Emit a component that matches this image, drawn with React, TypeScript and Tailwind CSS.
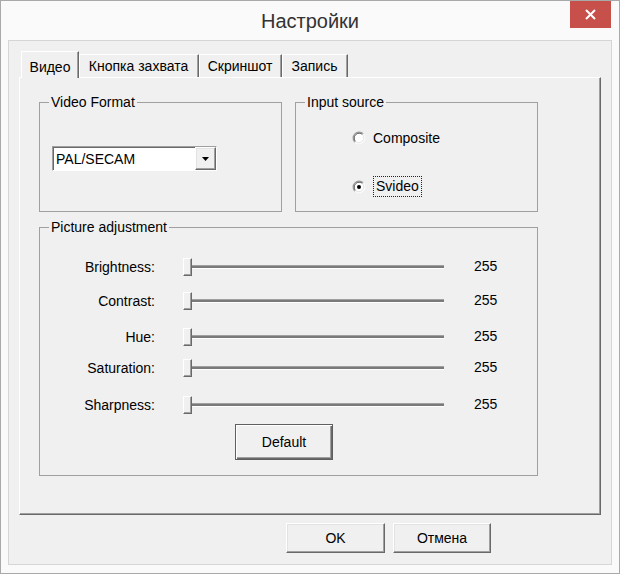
import React from "react";

const raised =
  "bg-[#f0f0f0] border border-t-white border-l-white border-r-[#696969] border-b-[#696969] shadow-[inset_-1px_-1px_0_#a0a0a0,inset_1px_1px_0_#e3e3e3]";

function Radio({ checked }: { checked?: boolean }) {
  return (
    <svg width="14" height="14" viewBox="0 0 14 14" className="shrink-0">
      <circle cx="7" cy="7" r="5.5" fill="#ffffff" />
      <path d="M2.76 11.24 A6 6 0 0 1 11.24 2.76" stroke="#9a9a9a" strokeWidth="1.2" fill="none" />
      <path d="M11.24 2.76 A6 6 0 0 1 2.76 11.24" stroke="#ffffff" strokeWidth="1" fill="none" />
      <path d="M3.47 10.53 A5 5 0 0 1 10.53 3.47" stroke="#5a5a5a" strokeWidth="1" fill="none" />
      <path d="M10.53 3.47 A5 5 0 0 1 3.47 10.53" stroke="#e3e3e3" strokeWidth="1" fill="none" />
      {checked && <circle cx="7" cy="7" r="2" fill="#000000" />}
    </svg>
  );
}

function Group({
  title,
  className,
  children,
}: {
  title: string;
  className: string;
  children?: React.ReactNode;
}) {
  return (
    <fieldset className={`m-0 p-0 min-w-0 border border-[#a0a0a0] ${className}`}>
      <legend className="ml-[9px] px-[2px] leading-[16px]">{title}</legend>
      {children}
    </fieldset>
  );
}

const rows = [
  { label: "Brightness:", mt: "mt-[22px]" },
  { label: "Contrast:", mt: "mt-[14px]" },
  { label: "Hue:", mt: "mt-[16px]" },
  { label: "Saturation:", mt: "mt-[11px]" },
  { label: "Sharpness:", mt: "mt-[17px]" },
];

export default function App() {
  return (
    <div className="w-[620px] h-[574px] bg-[#fafafa] border border-[#a9a9a9] flex flex-col font-['Liberation_Sans',Arial,sans-serif] text-[14px] text-[#000]">
      {/* Title bar */}
      <div className="h-[39px] relative flex items-center justify-center shrink-0">
        <span className="text-[20px] text-[#333] leading-none">Настройки</span>
        <div className="absolute top-0 right-[8px] w-[41px] h-[27px] bg-[#c7504b] flex items-center justify-center">
          <svg width="11" height="11" viewBox="0 0 11 11">
            <path d="M1 1 L10 10 M10 1 L1 10" stroke="#ffffff" strokeWidth="2" />
          </svg>
        </div>
      </div>

      {/* Client area */}
      <div className="ml-[7px] w-[604px] h-[525px] border border-[#d5d5d5] bg-[#f0f0f0] flex flex-col shrink-0">
        {/* Tabs */}
        <div className="mt-[10px] ml-[12px] h-[27px] -mb-px relative z-10 flex items-start">
          <div className="w-[58px] h-[27px] bg-[#f0f0f0] border-t border-l border-r border-t-white border-l-white border-r-[#696969] shadow-[inset_-1px_0_0_#a0a0a0] flex items-start justify-center pt-[5px]">
            Видео
          </div>
          <div className="mt-[3px] w-[120px] h-[23px] bg-[#f0f0f0] border-t border-r border-t-white border-r-[#696969] shadow-[inset_-1px_0_0_#a0a0a0,inset_1px_0_0_#fff] flex items-center justify-center">
            Кнопка захвата
          </div>
          <div className="mt-[3px] w-[83px] h-[23px] bg-[#f0f0f0] border-t border-r border-t-white border-r-[#696969] shadow-[inset_-1px_0_0_#a0a0a0,inset_1px_0_0_#fff] flex items-center justify-center">
            Скриншот
          </div>
          <div className="mt-[3px] w-[66px] h-[23px] bg-[#f0f0f0] border-t border-r border-t-white border-r-[#696969] shadow-[inset_-1px_0_0_#a0a0a0,inset_1px_0_0_#fff] flex items-center justify-center">
            Запись
          </div>
        </div>

        {/* Tab pane */}
        <div className="ml-[10px] w-[582px] h-[438px] border border-t-white border-l-white border-r-[#696969] border-b-[#696969] shadow-[inset_-1px_-1px_0_#a0a0a0] pl-[19px] pt-[16px] flex flex-col">
          <div className="flex gap-[13px]">
            <Group title="Video Format" className="w-[243px] h-[118px]">
              <div className="ml-[12px] mt-[36px] w-[165px] h-[25px] flex bg-white border border-t-[#a0a0a0] border-l-[#a0a0a0] border-r-white border-b-white shadow-[inset_1px_1px_0_#696969]">
                <div className="flex-1 pl-[3px] pt-px flex items-center">PAL/SECAM</div>
                <div className={`w-[21px] h-[23px] flex items-center justify-center ${raised}`}>
                  <svg width="7" height="4" viewBox="0 0 7 4">
                    <path d="M0 0 H7 L3.5 4 Z" fill="#000" />
                  </svg>
                </div>
              </div>
            </Group>
            <Group title="Input source" className="w-[243px] h-[118px]">
              <div className="ml-[56px] mt-[18px] h-[20px] flex items-center">
                <Radio />
                <span className="ml-[7px]">Composite</span>
              </div>
              <div className="ml-[56px] mt-[28px] h-[21px] flex items-center">
                <Radio checked />
                <span className="ml-[7px] h-[21px] px-[2px] border border-dotted border-[#222] flex items-center">
                  Svideo
                </span>
              </div>
            </Group>
          </div>

          <Group title="Picture adjustment" className="mt-[7px] w-[499px] h-[257px]">
            {rows.map((r) => (
              <div key={r.label} className={`flex items-center h-[20px] ${r.mt}`}>
                <div className="w-[115px] text-right">{r.label}</div>
                <div className="relative ml-[26px] w-[267px] h-[20px] flex items-center">
                  <div className="mx-[4px] flex-1 h-[4px] border-t border-b border-t-[#a0a0a0] border-b-white bg-[#7a7a7a]" />
                  <div className="absolute left-[2px] top-[1px] w-[9px] h-[18px] bg-[#f0f0f0] border border-t-white border-l-white border-r-[#696969] border-b-[#696969] shadow-[inset_-1px_-1px_0_#a0a0a0]" />
                </div>
                <div className="ml-[26px] -mt-[2px]">255</div>
              </div>
            ))}
            <div className="ml-[195px] mt-[9px] w-[98px] h-[36px] flex items-center justify-center bg-[#f0f0f0] border border-[#5f5f5f] shadow-[inset_1px_1px_0_#fff,inset_-1px_-1px_0_#696969,inset_-2px_-2px_0_#a0a0a0]">
              Default
            </div>
          </Group>
        </div>

        {/* Bottom buttons */}
        <div className="mt-[8px] ml-[277px] flex gap-[8px]">
          <div className={`w-[99px] h-[30px] flex items-center justify-center ${raised}`}>OK</div>
          <div className={`w-[98px] h-[30px] flex items-center justify-center ${raised}`}>Отмена</div>
        </div>
      </div>
    </div>
  );
}
